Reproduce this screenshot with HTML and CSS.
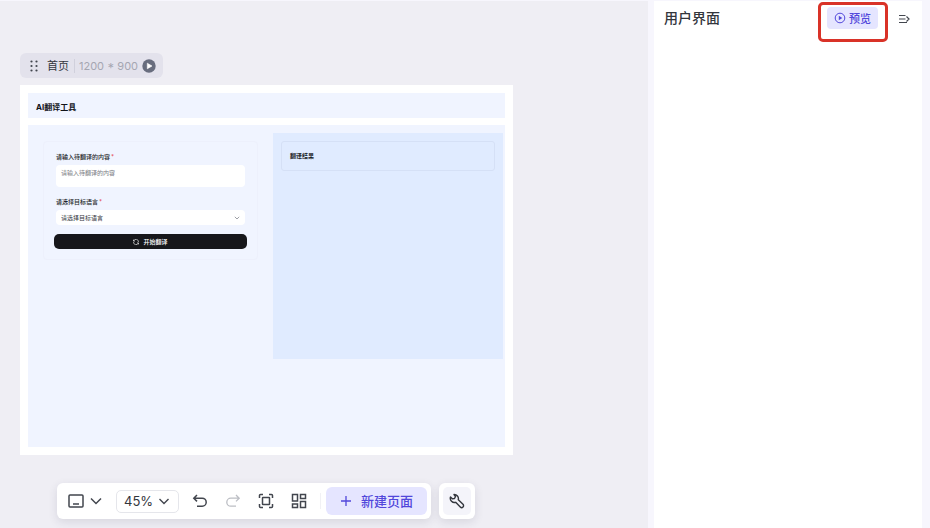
FILE: index.html
```html
<!DOCTYPE html>
<html lang="zh-CN">
<head>
    <meta charset="UTF-8">
    <meta name="viewport" content="width=device-width, initial-scale=1.0">
    <title>用户界面</title>
    <link rel="stylesheet" href="styles.css">
</head>
<body>
    <main class="workspace">
        <div class="page-tag">
            <svg class="drag" width="8" height="12" viewBox="0 0 8 12" fill="#42464e">
                <circle cx="1.5" cy="1.5" r="1.1"/><circle cx="6.5" cy="1.5" r="1.1"/>
                <circle cx="1.5" cy="6" r="1.1"/><circle cx="6.5" cy="6" r="1.1"/>
                <circle cx="1.5" cy="10.5" r="1.1"/><circle cx="6.5" cy="10.5" r="1.1"/>
            </svg>
            <span class="page-name">首页</span>
            <span class="page-size">1200 * 900</span>
            <button class="play" type="button" aria-label="运行">
                <svg width="14" height="14" viewBox="0 0 14 14">
                    <circle cx="7" cy="7" r="6.7" fill="#686d7e"/>
                    <path d="M5.3 4.2v5.6L10 7z" fill="#fff" stroke="#fff" stroke-width=".6" stroke-linejoin="round"/>
                </svg>
            </button>
        </div>

        <section class="artboard">
            <header class="app-header">
                <h1>AI翻译工具</h1>
            </header>
            <div class="app-body">
                <form class="card">
                    <label for="source">请输入待翻译的内容<span class="required">*</span></label>
                    <textarea id="source" placeholder="请输入待翻译的内容"></textarea>
                    <label for="lang">请选择目标语言<span class="required">*</span></label>
                    <div class="select">
                        <select id="lang">
                            <option>请选择目标语言</option>
                        </select>
                        <svg width="6" height="4" viewBox="0 0 6 4" fill="none" stroke="#85888f" stroke-width=".8">
                            <path d="M.8.8 3 3 5.2.8"/>
                        </svg>
                    </div>
                    <button class="submit" type="button">
                        <svg width="6" height="6" viewBox="0 0 12 12" fill="none" stroke="#fff" stroke-width="1.2">
                            <path d="M1 1.200v3h3M1.300 4A5 5 0 0 1 11 6M11 10.800v-3H8M10.700 8A5 5 0 0 1 1 6"/>
                        </svg>
                        开始翻译
                    </button>
                </form>
                <div class="result">
                    <h2>翻译结果</h2>
                </div>
            </div>
        </section>

        <div class="dock">
            <div class="toolbar">
                <button class="device" type="button" aria-label="设备">
                    <svg width="16" height="14" viewBox="0 0 16 14" fill="none" stroke="#42464e" stroke-width="1.5">
                        <rect x="1" y="1" width="14" height="12" rx="1"/>
                        <path d="M5 10h6"/>
                    </svg>
                    <svg width="12" height="8" viewBox="0 0 12 8" fill="none" stroke="#42464e" stroke-width="1.5">
                        <path d="m1 1.5 5 5 5-5"/>
                    </svg>
                </button>
                <div class="zoom">
                    <select aria-label="缩放">
                        <option>45%</option>
                    </select>
                    <svg width="10" height="7" viewBox="0 0 10 7" fill="none" stroke="#42464e" stroke-width="1.4">
                        <path d="M.5 1 5 5.5 9.5 1"/>
                    </svg>
                </div>
                <button class="tool" type="button" aria-label="撤销">
                    <svg width="16" height="14" viewBox="0 0 16 14" fill="none" stroke="#42464e" stroke-width="1.5">
                        <path d="M5 1 1.8 4.2 5 7.4M2 4.2h8.2a4 4 0 0 1 0 8H5"/>
                    </svg>
                </button>
                <button class="tool" type="button" aria-label="重做">
                    <svg width="16" height="14" viewBox="0 0 16 14" fill="none" stroke="#bcbec4" stroke-width="1.3">
                        <path d="m11 1 3.2 3.2L11 7.4M14 4.2H5.8a4 4 0 0 0 0 8H11"/>
                    </svg>
                </button>
                <button class="tool" type="button" aria-label="适应画布">
                    <svg width="16" height="16" viewBox="0 0 16 16" fill="none" stroke="#42464e" stroke-width="1.5">
                        <rect x="4.5" y="4.5" width="7" height="7" rx=".5"/>
                        <path d="M1.500 5V2.500a1 1 0 0 1 1-1H5M11 1.500h2.500a1 1 0 0 1 1 1V5M14.500 11v2.500a1 1 0 0 1-1 1H11M5 14.500H2.500a1 1 0 0 1-1-1V11"/>
                    </svg>
                </button>
                <button class="tool last" type="button" aria-label="布局">
                    <svg width="16" height="16" viewBox="0 0 16 16" fill="none" stroke="#42464e" stroke-width="1.5">
                        <rect x="1.5" y="1.5" width="5" height="6.5"/>
                        <rect x="9.5" y="1.5" width="5" height="4"/>
                        <rect x="1.5" y="11" width="5" height="3.5"/>
                        <rect x="9.5" y="8.5" width="5" height="6"/>
                    </svg>
                </button>
                <button class="new-page" type="button">
                    <svg width="12" height="12" viewBox="0 0 12 12" fill="none" stroke="#5147db" stroke-width="1.3">
                        <path d="M6 1v10M1 6h10"/>
                    </svg>
                    新建页面
                </button>
            </div>
            <div class="toolbox">
                <button type="button" aria-label="工具">
                    <svg width="16" height="16" viewBox="0 0 16 16" fill="none" stroke="#33363d" stroke-width="1.4" stroke-linejoin="round">
                        <path d="M5 1.500 6.500 3.500 5.500 5.500 3.300 5.800 1.500 4A4.200 4.200 0 0 0 6.700 9.300L11.300 14A1.700 1.700 0 0 0 14 11.300L9.300 6.700A4.200 4.200 0 0 0 5 1.500Z"/>
                    </svg>
                </button>
            </div>
        </div>
    </main>

    <aside class="panel">
        <header class="panel-header">
            <h2>用户界面</h2>
            <div class="highlight">
                <button class="preview" type="button">
                    <svg width="12" height="12" viewBox="0 0 12 12" fill="none" stroke="#5147db">
                        <circle cx="6" cy="6" r="4.8"/>
                        <path d="M4.8 3.8v4.4L8.3 6z" fill="#5147db" stroke="none"/>
                    </svg>
                    预览
                </button>
            </div>
            <button class="collapse" type="button" aria-label="收起">
                <svg width="12" height="10" viewBox="0 0 12 10" fill="none" stroke="#42464e" stroke-width="1.2">
                    <path d="M1 1.5h6.5M1 5h6.5M1 8.5h8M8.5 2.5 11 5 8.5 7.5"/>
                </svg>
            </button>
        </header>
    </aside>
</body>
</html>
```

FILE: styles.css
```css
* {
    box-sizing: border-box;
}
body {
    margin: 0;
    min-height: 100vh;
    display: flex;
    gap: 6px;
    padding: 1px 8px 0 0;
    background: #f7f6fd;
    font-family: Inter, "Noto Sans CJK SC", sans-serif;
    color: #33363d;
}
h1, h2 {
    margin: 0;
}
button, select, textarea {
    font-family: inherit;
    margin: 0;
    padding: 0;
    border: none;
    background: none;
    color: inherit;
}
button {
    display: flex;
    align-items: center;
    justify-content: center;
    cursor: pointer;
}
select {
    appearance: none;
}
svg {
    display: block;
    flex: none;
}

/* workspace */
.workspace {
    flex: 1;
    position: relative;
    padding: 52px 135px 72px 20px;
    background: #efeef4;
}
.page-tag {
    display: flex;
    align-items: center;
    width: fit-content;
    height: 25px;
    padding: 0 7px 0 10px;
    border-radius: 6px;
    background: #e3e2ec;
    font-size: 11px;
    line-height: 14px;
}
.page-name {
    margin-left: 9px;
    padding-right: 5px;
    border-right: 1px solid #d0d0dc;
}
.page-size {
    margin: 0 4px;
    color: #a5a6b2;
}
.artboard {
    display: flex;
    flex-direction: column;
    gap: 7px;
    aspect-ratio: 4 / 3;
    margin-top: 7px;
    padding: 8px;
    background: #fff;
}
.app-header {
    display: flex;
    align-items: center;
    height: 25px;
    padding: 2px 8px 0;
    background: #f0f4ff;
}
.app-header h1 {
    font-size: 8px;
    line-height: 12px;
    color: #111318;
}
.app-body {
    flex: 1;
    display: grid;
    grid-template-columns: 215fr 230fr;
    gap: 15px;
    align-items: start;
    padding: 8px 2px 8px 15px;
    background: #f0f4ff;
}
.card {
    display: flex;
    flex-direction: column;
    margin-top: 8px;
    padding: 10px;
    border: 1px solid #edf0fc;
    border-radius: 4px;
}
.card label {
    margin: 0 2px 3px;
    font-size: 6px;
    line-height: 10px;
    font-weight: 500;
    color: #1c1f29;
}
.required {
    margin-left: 1px;
    color: #e5484d;
}
.card textarea {
    height: 22px;
    margin: 0 2px 10px;
    padding: 3px 5px;
    border-radius: 4px;
    background: #fff;
    font-size: 6px;
    line-height: 9px;
    resize: none;
}
.card textarea::placeholder {
    color: #777a82;
}
.select {
    display: flex;
    align-items: center;
    height: 15px;
    margin: 0 2px 9px;
    padding: 0 5px;
    border-radius: 4px;
    background: #fff;
}
.select select {
    flex: 1;
    font-size: 6px;
    line-height: 9px;
}
.submit {
    gap: 4px;
    height: 15px;
    border-radius: 5px;
    background: #17171b;
    color: #fff;
    font-size: 6px;
    font-weight: 500;
}
.result {
    height: 226px;
    padding: 8px;
    background: #e0ebff;
}
.result h2 {
    padding: 8px;
    border: 1px solid #d5e0f6;
    border-radius: 3px;
    font-size: 6px;
    line-height: 12px;
    color: #1c1f29;
}

/* floating toolbar */
.dock {
    position: absolute;
    left: 57px;
    bottom: 9px;
    display: flex;
    gap: 8px;
}
.toolbar, .toolbox {
    display: flex;
    align-items: center;
    height: 36px;
    padding: 4px;
    border-radius: 6px;
    background: #fff;
    box-shadow: 0 3px 10px rgba(40, 40, 70, 0.12);
}
.device {
    gap: 6px;
    margin: 0 14px 0 7px;
}
.zoom {
    display: flex;
    align-items: center;
    height: 23px;
    margin-right: 13px;
    padding: 0 9px 0 7px;
    border: 1px solid #e5e6eb;
    border-radius: 5px;
}
.zoom select {
    width: 35px;
    font-size: 13px;
}
.tool {
    width: 16px;
    margin-right: 17px;
}
.tool.last {
    width: 30px;
    margin-right: 5px;
    justify-content: flex-start;
    border-right: 1px solid #f1f1f5;
}
.new-page {
    gap: 9px;
    height: 28px;
    padding: 0 14px 1px;
    border-radius: 6px;
    background: #e5e5ff;
    color: #5147db;
    font-size: 13px;
    font-weight: 500;
}
.toolbox button {
    width: 28px;
    height: 28px;
    border-radius: 5px;
    background: #f4f4fa;
}

/* right panel */
.panel {
    width: 268px;
    background: #fff;
}
.panel-header {
    display: flex;
    align-items: flex-start;
    padding: 0 12px 0 10px;
}
.panel-header h2 {
    flex: 1;
    font-size: 14px;
    line-height: 34px;
    font-weight: 500;
}
.highlight {
    height: 40px;
    margin: 1px 10px 0 0;
    padding: 2px 7px 2px 6px;
    border: 3px solid #d93228;
    border-radius: 5px;
}
.preview {
    gap: 3px;
    height: 22px;
    padding: 0 7px 1px;
    border-radius: 4px;
    background: #e5e5ff;
    color: #5147db;
    font-size: 11px;
    font-weight: 500;
}
.collapse {
    height: 36px;
}
```
